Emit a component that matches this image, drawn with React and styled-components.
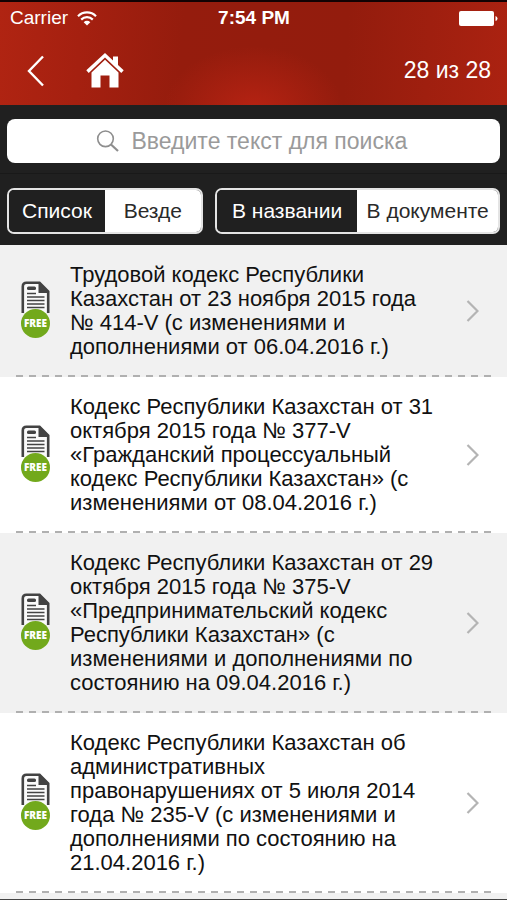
import React, { useState } from "react";
import styled, { createGlobalStyle } from "styled-components";

const GlobalStyle = createGlobalStyle`
    * {
        box-sizing: border-box;
    }
    body {
        margin: 0;
        background-color: #f1f1f1;
        font-family: "Liberation Sans", Arial, Helvetica, sans-serif;
        color: #111;
    }
    button, input {
        font-family: inherit;
    }
`
const Screen = styled.div`
    display: flex;
    flex-direction: column;
    height: 100vh;
    overflow: hidden;
    border-top: 2px solid #120203;
    border-bottom: 1px solid #444;
`
const Header = styled.header`
    flex-shrink: 0;
    color: white;
    background:
        radial-gradient(ellipse 90px 64px at 50% 105%, rgba(190, 36, 20, 0.8) 0%, rgba(190, 36, 20, 0) 100%),
        linear-gradient(94deg, #b02412 0%, #a52010 16%, #951c0d 36%, #931c0d 68%, #ab2211 100%);
`
const StatusBar = styled.div`
    display: grid;
    grid-template-columns: 1fr auto 1fr;
    align-items: center;
    height: 32px;
    padding: 0 9px 0 10px;
    font-size: 19px;
`
const Carrier = styled.div`
    display: flex;
    align-items: center;
    gap: 9px;
`
const Clock = styled.time`
    font-weight: 700;
`
const Battery = styled.svg`
    justify-self: end;
`
const NavBar = styled.nav`
    display: flex;
    align-items: center;
    height: 71px;
    padding: 2px 16px 0 20px;
`
const NavButton = styled.button`
    display: flex;
    justify-content: center;
    width: ${props => props.$wide ? "44px" : "32px"};
    margin-right: ${props => props.$wide ? "0" : "31px"};
    padding: 0;
    border: none;
    background: none;
    color: white;
    cursor: pointer;
`
const Counter = styled.span`
    margin-left: auto;
    font-size: 23px;
`
const Tools = styled.div`
    flex-shrink: 0;
    background-color: #202020;
`
const SearchRow = styled.form`
    padding: 14px 7px 10px;
    border-bottom: 1px solid #191919;
`
const SearchBox = styled.label`
    display: flex;
    align-items: center;
    justify-content: center;
    gap: 13px;
    height: 44px;
    padding: 0 12px;
    border-radius: 8px;
    background-color: white;
    color: #8e8e8e;
`
const SearchInput = styled.input`
    flex: 0 1 280px;
    min-width: 0;
    padding: 0;
    border: none;
    outline: none;
    background: none;
    font-size: 23px;
    color: #222;
    &::placeholder {
        color: #9a9a9a;
        opacity: 1;
    }
`
const Filters = styled.div`
    display: flex;
    gap: 12px;
    padding: 14px 7px 11px;
`
const Segments = styled.div`
    display: flex;
    flex: ${props => props.$grow} 1 0;
    height: 46px;
    border: 2px solid #e4e4e4;
    border-radius: 7px;
    overflow: hidden;
`
const Segment = styled.button`
    flex: 1 1 0;
    padding: 0;
    border: none;
    background-color: ${props => props.$active ? "#202020" : "white"};
    color: ${props => props.$active ? "white" : "#2a2a2a"};
    font-size: 21px;
    white-space: nowrap;
    cursor: pointer;
`
const List = styled.ul`
    flex: 1;
    min-height: 0;
    margin: 0;
    padding: 0;
    overflow: hidden;
    list-style: none;
`
const Item = styled.li`
    background-color: white;
    &:nth-child(odd) {
        background-color: #f1f1f1;
    }
`
const ItemLink = styled.a`
    display: flex;
    align-items: center;
    padding: 18px 28px 16px 20px;
    color: inherit;
    text-decoration: none;
`
const DocMark = styled.span`
    position: relative;
    flex-shrink: 0;
    width: 32px;
    height: 57px;
    margin: 0 18px 4px 0;
`
const FreeBadge = styled.span`
    position: absolute;
    left: 1px;
    bottom: 0;
    width: 29px;
    height: 29px;
    border-radius: 50%;
    background-color: #72a91c;
    color: white;
    font-family: "Open Sans", sans-serif;
    font-size: 10px;
    font-weight: 800;
    line-height: 29px;
    text-align: center;
`
const ItemTitle = styled.span`
    flex: 1;
    padding-right: 24px;
    font-size: 22px;
    line-height: 24px;
`
const Divider = styled.div`
    height: 2px;
    margin: 0 16px;
    background: repeating-linear-gradient(90deg, #b0b0b0 0 7px, transparent 7px 13px);
`

const BackIcon = () => (
    <svg width="18" height="32" viewBox="0 0 18 32" fill="none" stroke="currentColor" strokeWidth="2.4">
        <path d="M16 1.5 2 16 16 30.5" />
    </svg>
)

const HomeIcon = () => (
    <svg width="38" height="35" viewBox="0 0 38 35" fill="currentColor">
        <path d="M19 0 27 7.5V3.500h5v8.500L37.700 17.200 35.300 20 19 4.600 2.700 20 .3 17.200Z" />
        <path d="M19 6.800 32.500 19.500V34.500H23.500V22.500H14.500V34.500H5.500V19.500Z" />
    </svg>
)

const WifiIcon = () => (
    <svg width="20" height="15" viewBox="0 0 20 15" fill="none" stroke="currentColor" strokeWidth="2.2">
        <path d="M1 5.200a12.700 12.700 0 0 1 18 0" />
        <path d="M4.200 8.600a8.200 8.200 0 0 1 11.600 0" />
        <path d="M10 14.500 6.700 11.200a4.700 4.700 0 0 1 6.600 0Z" fill="currentColor" stroke="none" />
    </svg>
)

const SearchIcon = () => (
    <svg width="23" height="22" viewBox="0 0 23 22" fill="none" stroke="currentColor">
        <circle cx="9.500" cy="8.800" r="7.800" strokeWidth="1.600" />
        <path d="M15 14.500 22 21" strokeWidth="2.200" />
    </svg>
)

const DocIcon = () => (
    <svg width="32" height="34" viewBox="0 0 32 34" fill="none" stroke="#434343">
        <path d="M2.800 32V5.500Q2.800 1.800 6.500 1.800H19.500L28.200 10.500V32" fill="#fafafa" strokeWidth="2.600" />
        <path d="M18.500 1.500H20L28.500 10V12H18.500Z" fill="#434343" stroke="none" />
        <rect x="7" y="5.500" width="9" height="3.500" rx="1.500" fill="#434343" stroke="none" />
        <path d="M7 12.500H16M7 16H24.500M7 19.500H24.500M7 23H24.500M7 26.500H24.500" strokeWidth="1.400" />
    </svg>
)

const ChevronIcon = () => (
    <svg width="13" height="22" viewBox="0 0 13 22" fill="none" stroke="#b4b4b4" strokeWidth="2.200">
        <path d="M1.500 1 11.500 11 1.500 21" />
    </svg>
)

const documents = [
    "Трудовой кодекс Республики Казахстан от 23 ноября 2015 года № 414-V (с изменениями и дополнениями от 06.04.2016 г.)",
    "Кодекс Республики Казахстан от 31 октября 2015 года № 377-V «Гражданский процессуальный кодекс Республики Казахстан» (с изменениями от 08.04.2016 г.)",
    "Кодекс Республики Казахстан от 29 октября 2015 года № 375-V «Предпринимательский кодекс Республики Казахстан» (с изменениями и дополнениями по состоянию на 09.04.2016 г.)",
    "Кодекс Республики Казахстан об административных правонарушениях от 5 июля 2014 года № 235-V (с изменениями и дополнениями по состоянию на 21.04.2016 г.)",
]

const Switcher = ({ options, label, grow }) => {
    const [active, setActive] = useState(options[0]);
    return(
        <Segments role="group" aria-label={label} $grow={grow}>
            {options.map(option => (
                <Segment
                    key={option}
                    type="button"
                    $active={option === active}
                    aria-pressed={option === active}
                    onClick={() => setActive(option)}
                >
                    {option}
                </Segment>
            ))}
        </Segments>
    )
}

const App = () => {
    return(
        <Screen>
            <GlobalStyle />
            <Header>
                <StatusBar>
                    <Carrier>Carrier <WifiIcon /></Carrier>
                    <Clock>7:54 PM</Clock>
                    <Battery width="39" height="15" viewBox="0 0 39 15" fill="currentColor">
                        <rect width="35" height="15" rx="2" />
                        <path d="M36.500 5Q38.500 5.500 38.500 7.500T36.500 10Z" />
                    </Battery>
                </StatusBar>
                <NavBar>
                    <NavButton type="button" aria-label="Назад"><BackIcon /></NavButton>
                    <NavButton type="button" aria-label="Главная" $wide><HomeIcon /></NavButton>
                    <Counter>28 из 28</Counter>
                </NavBar>
            </Header>
            <Tools>
                <SearchRow role="search">
                    <SearchBox>
                        <SearchIcon />
                        <SearchInput type="text" placeholder="Введите текст для поиска" aria-label="Введите текст для поиска" />
                    </SearchBox>
                </SearchRow>
                <Filters>
                    <Switcher options={["Список", "Везде"]} label="Раздел" grow={195} />
                    <Switcher options={["В названии", "В документе"]} label="Область поиска" grow={286} />
                </Filters>
            </Tools>
            <List>
                {documents.map(title => (
                    <Item key={title}>
                        <ItemLink href="#">
                            <DocMark>
                                <DocIcon />
                                <FreeBadge>FREE</FreeBadge>
                            </DocMark>
                            <ItemTitle>{title}</ItemTitle>
                            <ChevronIcon />
                        </ItemLink>
                        <Divider />
                    </Item>
                ))}
            </List>
        </Screen>
    )
}

export default App;
